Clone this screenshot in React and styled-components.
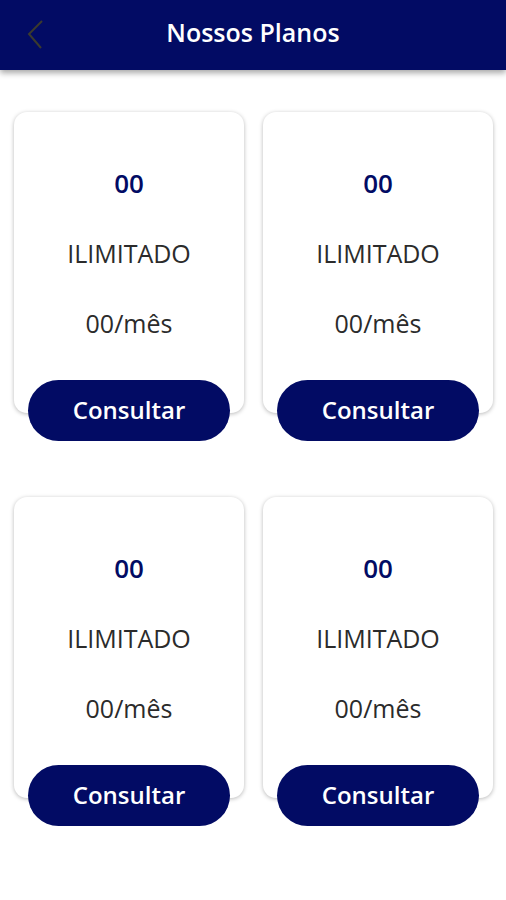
import React from "react";
import styled, { createGlobalStyle } from "styled-components";

const Global = createGlobalStyle`
  html, body { margin: 0; padding: 0; background: #ffffff; }
  body { font-family: "Open Sans", "Noto Sans", sans-serif; }
  * { box-sizing: border-box; }
`;

const NAVY = "#020b64";

const Page = styled.div`
  width: 506px;
  min-height: 900px;
  background: #ffffff;
`;

const Header = styled.header`
  height: 70px;
  background: ${NAVY};
  display: grid;
  grid-template-columns: 60px 1fr 60px;
  align-items: center;
  box-shadow: 0 3px 6px rgba(0, 0, 0, 0.35);
  position: relative;
  z-index: 1;
`;

const BackButton = styled.button`
  background: none;
  border: none;
  padding: 0 0 0 26px;
  height: 70px;
  display: flex;
  align-items: center;
  cursor: pointer;
`;

const Title = styled.h1`
  margin: 0;
  text-align: center;
  color: #ffffff;
  font-family: "Open Sans", sans-serif;
  font-weight: 600;
  font-size: 25px;
  line-height: 1;
  padding-bottom: 6px;
`;

const Grid = styled.main`
  display: grid;
  grid-template-columns: 230px 230px;
  column-gap: 19px;
  row-gap: 56px;
  padding: 42px 13px 40px 14px;
`;

const PlanItem = styled.section`
  display: flex;
  flex-direction: column;
  align-items: center;
`;

const Card = styled.div`
  width: 100%;
  height: 301px;
  background: #ffffff;
  border-radius: 13px;
  box-shadow: 0 1px 4px rgba(0, 0, 0, 0.28);
  display: flex;
  flex-direction: column;
  align-items: center;
  padding-top: 55px;
  gap: 38px;
`;

const Line = styled.div`
  line-height: 32px;
  height: 32px;
  font-family: "Open Sans", sans-serif;
  font-size: ${(p) => (p.$accent ? 26 : 25)}px;
  font-weight: ${(p) => (p.$accent ? 600 : 400)};
  color: ${(p) => (p.$accent ? NAVY : "#2b2b2b")};
`;

const ConsultButton = styled.button`
  margin-top: -33px;
  width: 202px;
  height: 61px;
  border: none;
  border-radius: 31px;
  background: ${NAVY};
  color: #ffffff;
  font-family: "Open Sans", sans-serif;
  font-weight: 600;
  font-size: 24px;
  padding: 0 0 2px;
  cursor: pointer;
  position: relative;
`;

const plans = [1, 2, 3, 4];

export default function App() {
  return (
    <Page>
      <Global />
      <Header>
        <BackButton aria-label="Voltar">
          <svg width="20" height="30" viewBox="0 0 20 30">
            <path d="M16 1 L3 14 L15 28" fill="none" stroke="#3b3a2e" strokeWidth="2" />
          </svg>
        </BackButton>
        <Title>Nossos Planos</Title>
        <span />
      </Header>
      <Grid>
        {plans.map((p) => (
          <PlanItem key={p}>
            <Card>
              <Line $accent>00</Line>
              <Line>ILIMITADO</Line>
              <Line>00/mês</Line>
            </Card>
            <ConsultButton>Consultar</ConsultButton>
          </PlanItem>
        ))}
      </Grid>
    </Page>
  );
}
